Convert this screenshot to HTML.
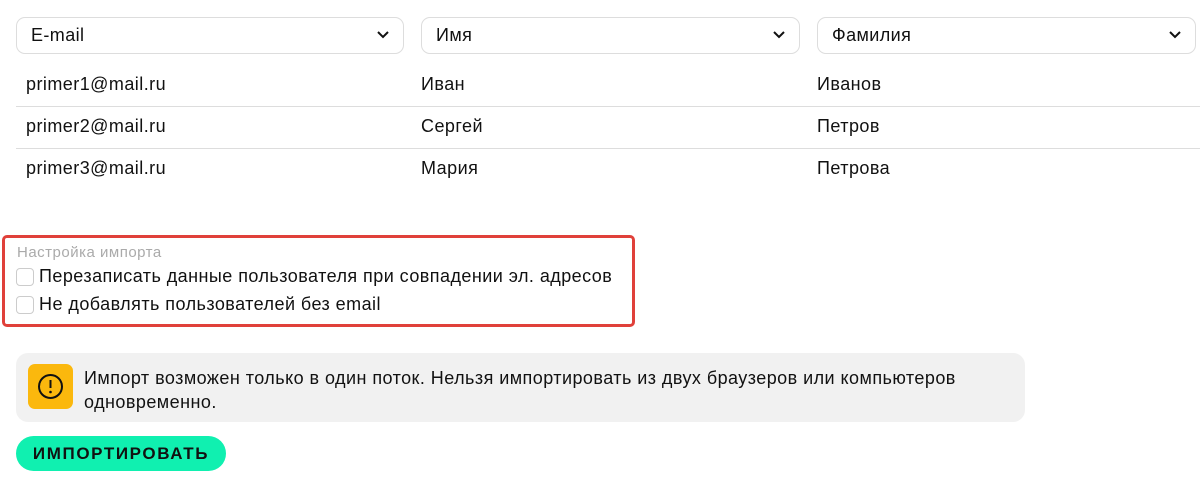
<!DOCTYPE html>
<html><head><meta charset="utf-8"><style>
*{box-sizing:border-box;margin:0;padding:0}
body{width:1200px;height:478px;background:#fff;font-family:"Liberation Sans",sans-serif;color:#111;position:relative;overflow:hidden}
.sel{position:absolute;top:17px;height:37px;border:1px solid #ddd;border-radius:9px;font-size:18px;letter-spacing:0.4px;padding:7px 14px}
.sel svg{position:absolute;right:14px;top:13px}
.cell{position:absolute;font-size:18px;letter-spacing:0.45px}
.line{position:absolute;left:16px;right:0;height:1px;background:#ddd}
.red{position:absolute;left:2px;top:235px;width:633px;height:92px;border:3px solid #e0403a;border-radius:5px}
.cb{position:absolute;left:16px;width:18px;height:18px;border:1px solid #ccc;border-radius:4px}
.warn{position:absolute;left:16px;top:353px;width:1009px;height:69px;background:#f1f1f1;border-radius:12px}
.btn{position:absolute;left:16px;top:436px;width:210px;height:35px;background:#10f0b0;border-radius:18px;font-weight:bold;font-size:17px;letter-spacing:1.6px;text-align:center;line-height:35px}
</style></head><body>
<div class="sel" style="left:16px;width:388px">E-mail<svg width="12" height="8"><path d="M1 1l5 5 5-5" stroke="#111" stroke-width="2" fill="none"/></svg></div>
<div class="sel" style="left:421px;width:379px">Имя<svg width="12" height="8"><path d="M1 1l5 5 5-5" stroke="#111" stroke-width="2" fill="none"/></svg></div>
<div class="sel" style="left:817px;width:379px">Фамилия<svg width="12" height="8"><path d="M1 1l5 5 5-5" stroke="#111" stroke-width="2" fill="none"/></svg></div>
<div class="cell" style="left:26px;top:74px">primer1@mail.ru</div>
<div class="cell" style="left:421px;top:74px">Иван</div>
<div class="cell" style="left:817px;top:74px">Иванов</div>
<div class="line" style="top:106px"></div>
<div class="cell" style="left:26px;top:116px">primer2@mail.ru</div>
<div class="cell" style="left:421px;top:116px">Сергей</div>
<div class="cell" style="left:817px;top:116px">Петров</div>
<div class="line" style="top:148px"></div>
<div class="cell" style="left:26px;top:158px">primer3@mail.ru</div>
<div class="cell" style="left:421px;top:158px">Мария</div>
<div class="cell" style="left:817px;top:158px">Петрова</div>
<div class="red"></div>
<div class="cell" style="left:17px;top:244px;font-size:15px;letter-spacing:0.5px;color:#aaa">Настройка импорта</div>
<div class="cb" style="top:268px"></div>
<div class="cell" style="left:39px;top:266px">Перезаписать данные пользователя при совпадении эл. адресов</div>
<div class="cb" style="top:296px"></div>
<div class="cell" style="left:39px;top:294px">Не добавлять пользователей без email</div>
<div class="warn"></div>
<div style="position:absolute;left:28px;top:364px;width:45px;height:45px;background:#fbb80d;border-radius:7px"><svg width="45" height="45"><circle cx="22.5" cy="22.5" r="11.5" stroke="#111" stroke-width="2" fill="none"/><path d="M22.5 16v8" stroke="#111" stroke-width="2"/><circle cx="22.5" cy="28" r="1.3" fill="#111"/></svg></div>
<div class="cell" style="left:84px;top:366px;line-height:24px;width:910px">Импорт возможен только в один поток. Нельзя импортировать из двух браузеров или компьютеров одновременно.</div>
<div class="btn">ИМПОРТИРОВАТЬ</div>
</body></html>
